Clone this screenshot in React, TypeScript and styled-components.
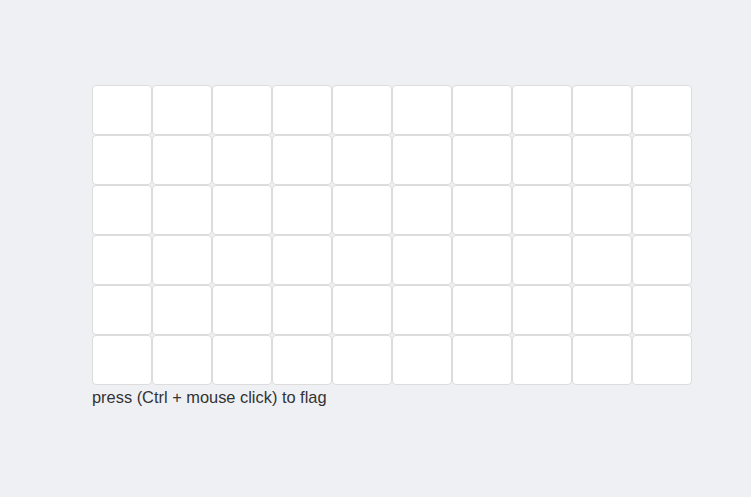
import React from "react";
import styled, { createGlobalStyle } from "styled-components";

const Global = createGlobalStyle`
  html, body { margin: 0; padding: 0; background: #eff0f4; }
  body { font-family: "Liberation Sans", Arial, sans-serif; color: #333; }
`;

const Page = styled.div`
  padding: 85px 0 0 92px;
`;

const Board = styled.div`
  display: grid;
  grid-template-columns: repeat(10, 60px);
  grid-auto-rows: 50px;
  width: 600px;
`;

const Cell = styled.div`
  box-sizing: border-box;
  background: #fff;
  border: 1px solid #dcdcdc;
  border-radius: 4px;
  cursor: pointer;
`;

const Hint = styled.div`
  font-size: 16.4px;
  line-height: 24px;
  margin-top: 0;
  color: #333;
`;

export default function App() {
  const cells = Array.from({ length: 60 });
  return (
    <>
      <Global />
      <Page>
        <Board>
          {cells.map((_, i) => (
            <Cell key={i} />
          ))}
        </Board>
        <Hint>press (Ctrl + mouse click) to flag</Hint>
      </Page>
    </>
  );
}
